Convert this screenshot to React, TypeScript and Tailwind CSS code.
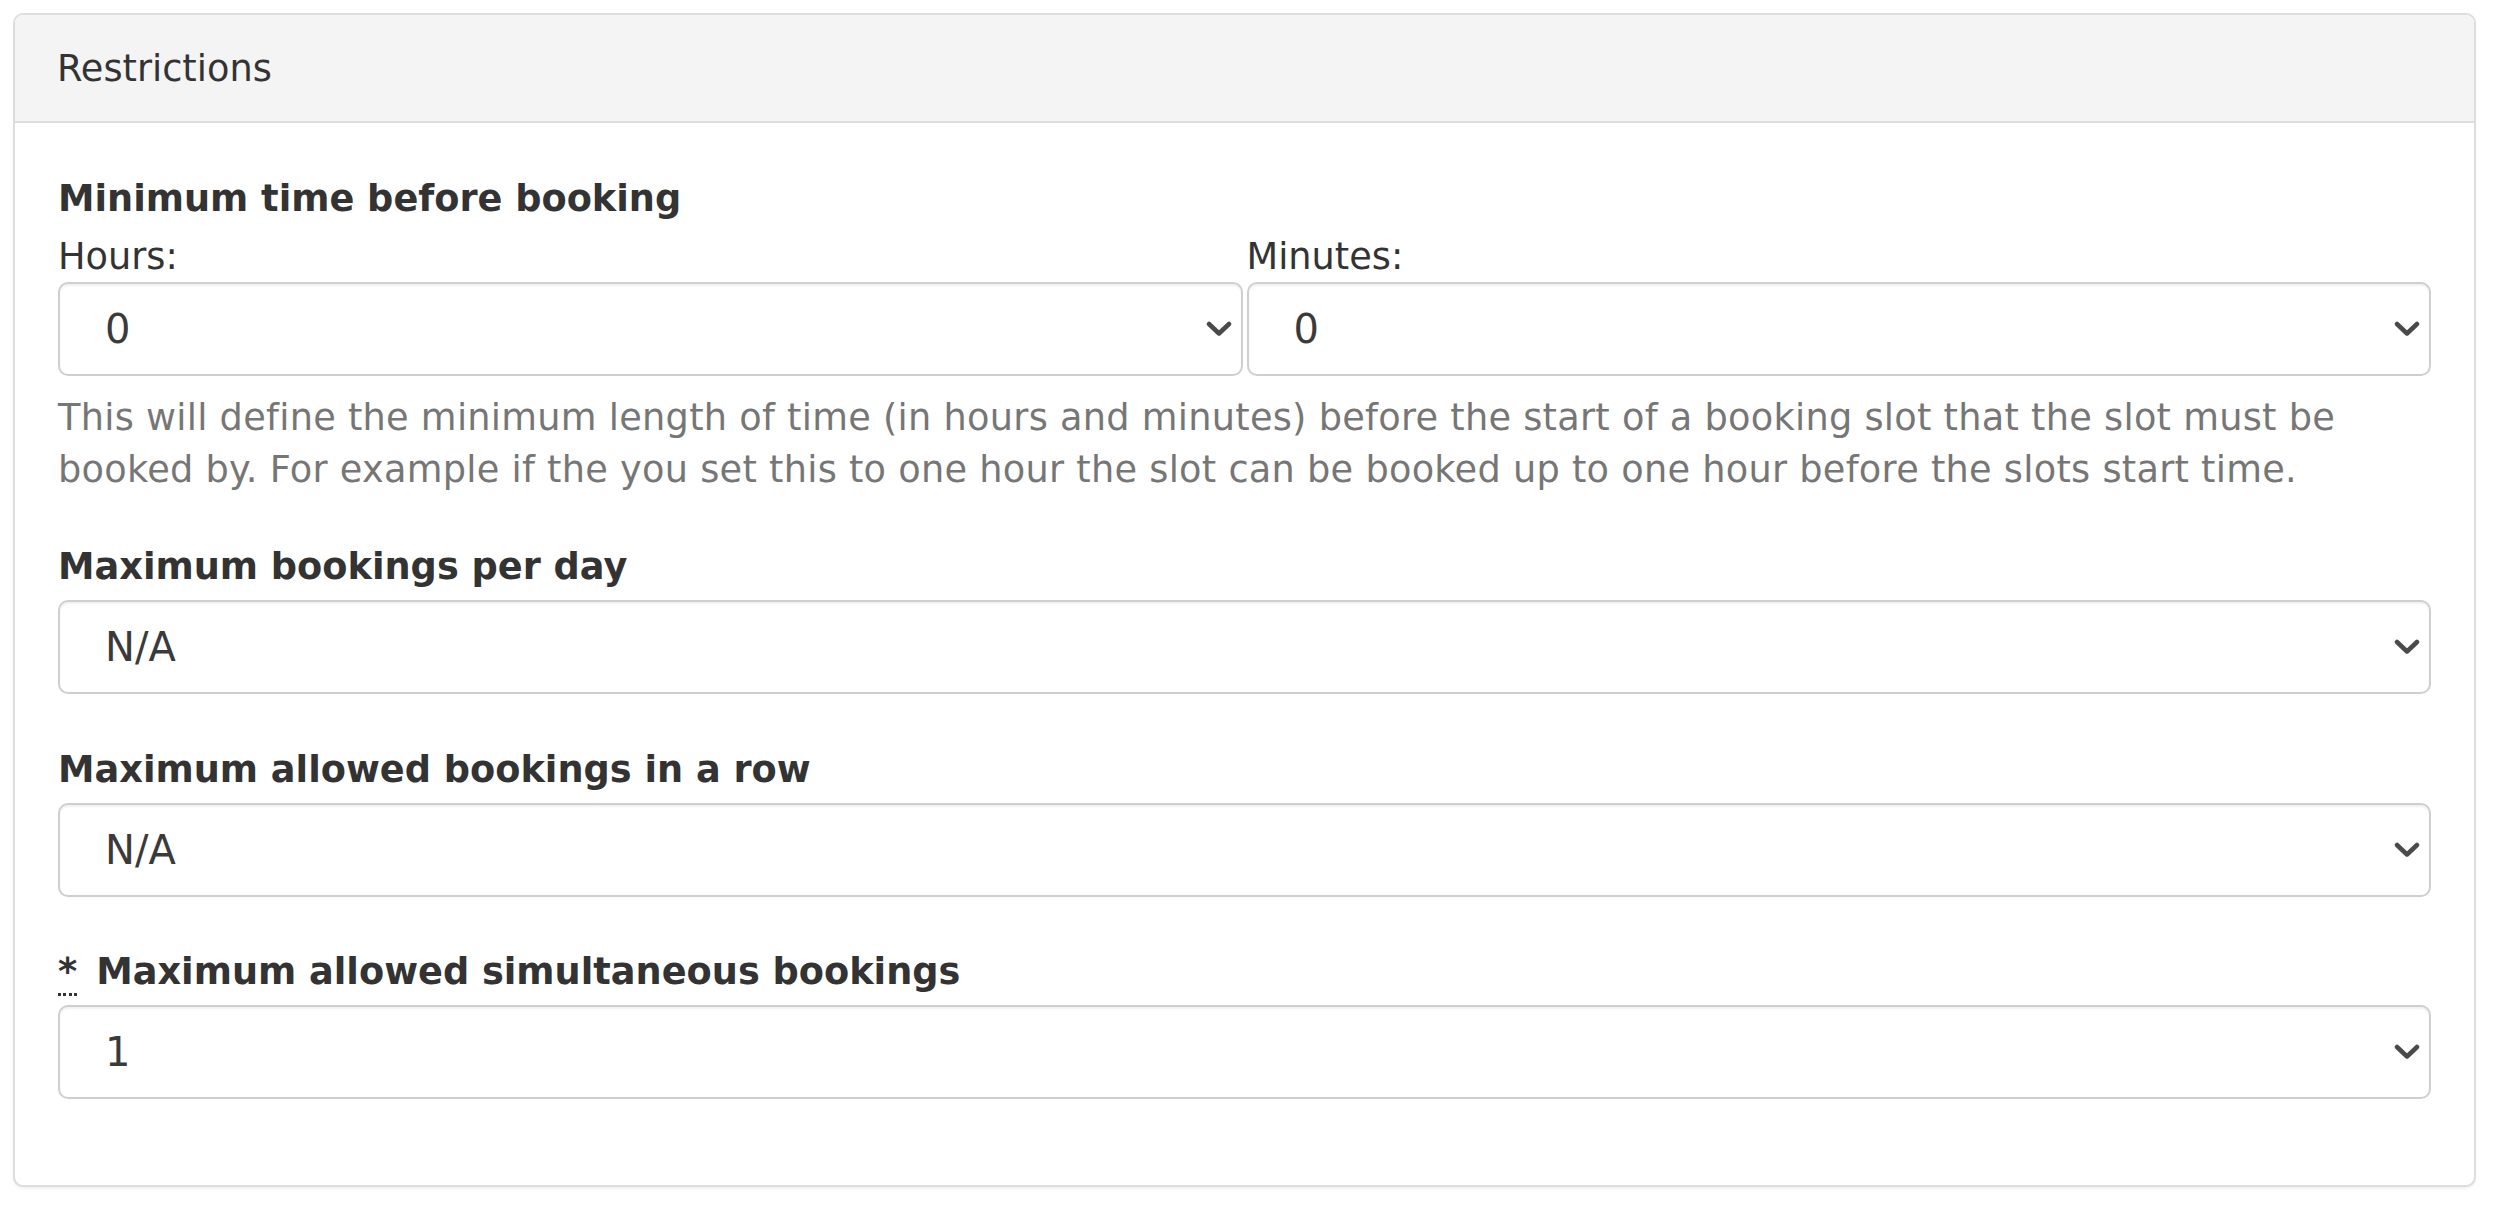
import React from 'react'

function Chevron() {
  return (
    <svg width="26" height="16" viewBox="0 0 26 16" fill="none" className="shrink-0">
      <polyline
        points="3,3 13,12.5 23,3"
        stroke="#4a4a4a"
        strokeWidth="4.5"
        strokeLinecap="round"
        strokeLinejoin="round"
      />
    </svg>
  )
}

function FakeSelect({ value }: { value: string }) {
  return (
    <div className="h-[94px] flex items-center justify-between pl-[45px] pr-[9px] bg-white border-2 border-[#cfcfcf] rounded-[10px] shadow-[inset_0_2px_2px_rgba(0,0,0,0.06)] text-[40px] text-[#3a3a3a]">
      <span>{value}</span>
      <Chevron />
    </div>
  )
}

function FieldLabel({ children }: { children: React.ReactNode }) {
  return <div className="font-bold leading-[50px] mb-[8px] text-[#333333]">{children}</div>
}

export default function App() {
  return (
    <div
      className="min-h-screen bg-white pt-[13px] pl-[13px]"
      style={{ fontFamily: '"DejaVu Sans", Verdana, sans-serif' }}
    >
      <div className="w-[2463px] bg-white border-2 border-[#dddddd] rounded-[10px] shadow-[0_2px_2px_rgba(0,0,0,0.05)] text-[36.7px] text-[#333333]">
        {/* Header */}
        <div className="h-[108px] flex items-center px-[42px] pt-[2px] bg-[#f4f4f4] border-b-2 border-[#dddddd] rounded-t-[8px]">
          Restrictions
        </div>

        {/* Body */}
        <div className="pt-[51px] pb-[86px] px-[43px]">
          <FieldLabel>Minimum time before booking</FieldLabel>
          <div className="grid grid-cols-2 gap-[4px]">
            <div>
              <div className="leading-[50px]">Hours:</div>
              <FakeSelect value="0" />
            </div>
            <div>
              <div className="leading-[50px]">Minutes:</div>
              <FakeSelect value="0" />
            </div>
          </div>
          <p className="mt-[16px] leading-[52px] tracking-[0.27px] text-[#767676]">
            This will define the minimum length of time (in hours and minutes) before the start of a booking slot that the slot must be
            <br />
            booked by. For example if the you set this to one hour the slot can be booked up to one hour before the slots start time.
          </p>

          <div className="mt-[46px]">
            <FieldLabel>Maximum bookings per day</FieldLabel>
            <FakeSelect value="N/A" />
          </div>

          <div className="mt-[51px]">
            <FieldLabel>Maximum allowed bookings in a row</FieldLabel>
            <FakeSelect value="N/A" />
          </div>

          <div className="mt-[50px]">
            <FieldLabel>
              <abbr
                title="required"
                className="no-underline border-b-[3px] border-dotted border-[#333333] pb-0"
              >
                *
              </abbr>
              <span className="ml-[19px]">Maximum allowed simultaneous bookings</span>
            </FieldLabel>
            <FakeSelect value="1" />
          </div>
        </div>
      </div>
    </div>
  )
}
